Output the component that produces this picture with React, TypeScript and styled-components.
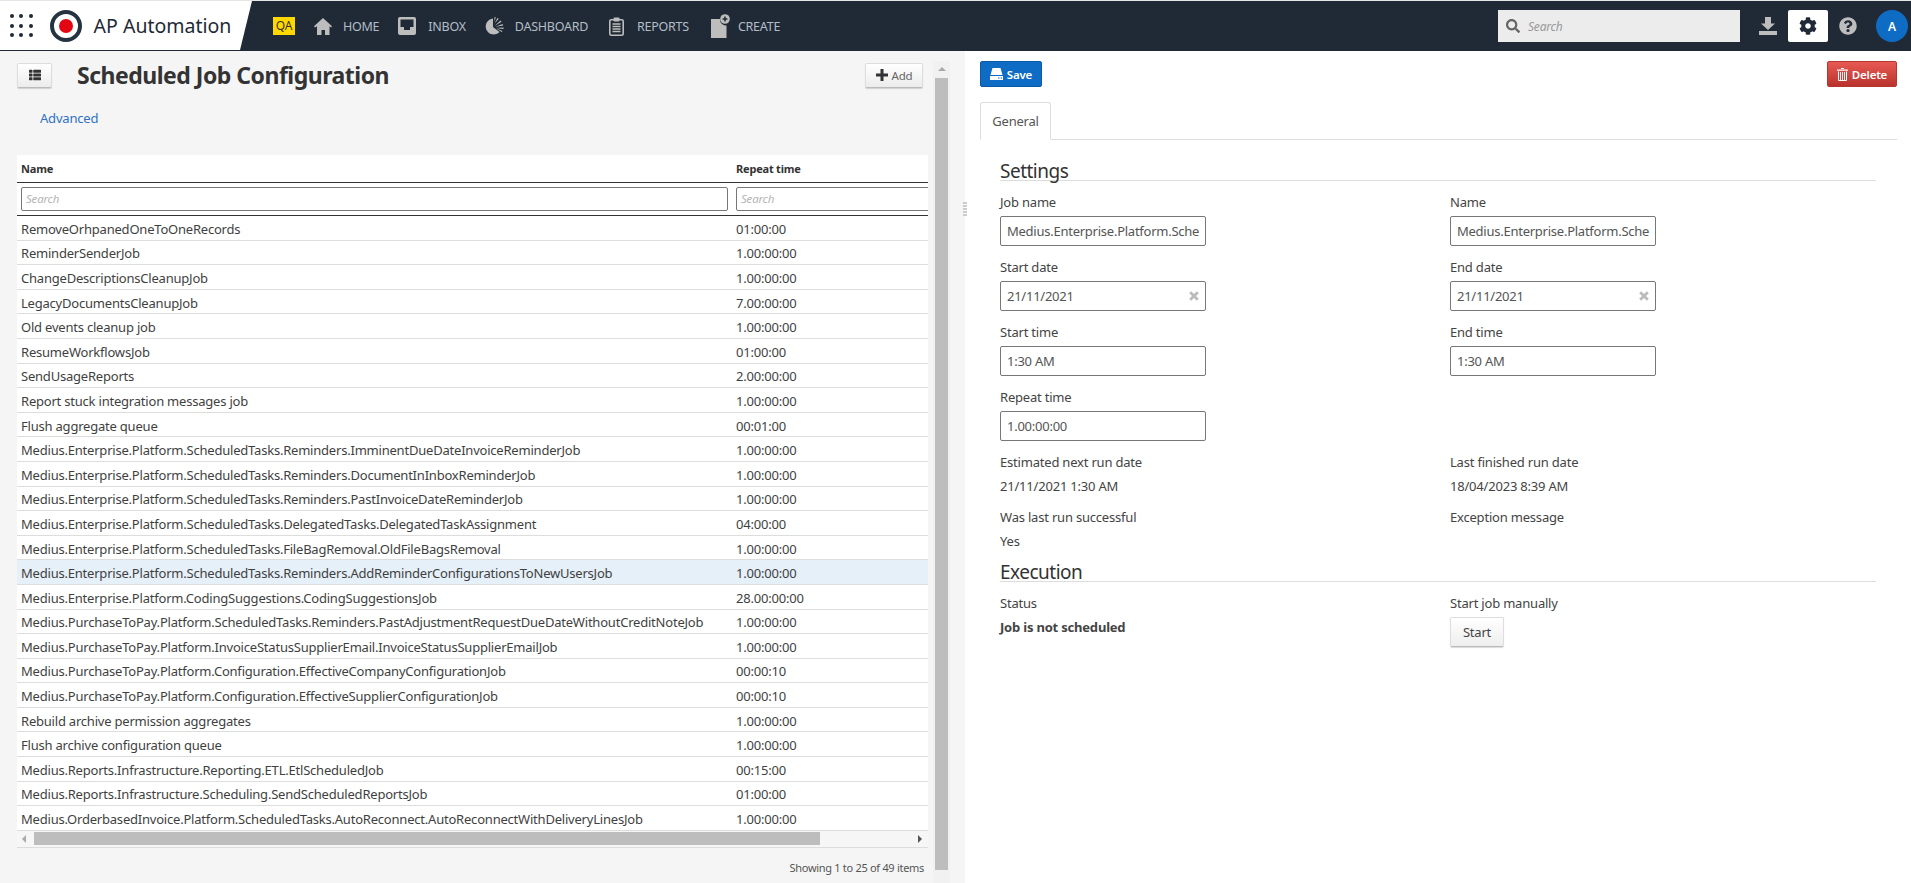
import React from "react";
import styled, { createGlobalStyle } from "styled-components";
import { FaThList, FaCog, FaQuestionCircle, FaSearch } from "react-icons/fa";

const Global = createGlobalStyle`
  html, body { margin: 0; padding: 0; height: 100%; overflow: hidden; background: #fff; }
  body { font-family: "Noto Sans", "Open Sans", sans-serif; color: #333; letter-spacing: -0.2px; }
  * { box-sizing: border-box; }
  button { letter-spacing: inherit; }
`;
const Page = styled.div`height: 883px; width: 1911px; display: flex; flex-direction: column; overflow: hidden; font-size: 13px;`;
const TopBar = styled.header`height: 51px; flex: none; background: #1f2a36; border-top: 1px solid #e6e6e6; display: flex; align-items: center;`;
const Brand = styled.div`width: 252px; height: 49px; align-self: flex-start; background: #fff; clip-path: polygon(0 0, 100% 0, 240px 100%, 0 100%); display: flex; align-items: center; padding-left: 10px; flex: none;`;
const Dots = styled.div`display: grid; grid-template-columns: repeat(3, 4px); gap: 5.3px; margin-right: 17px;`;
const Dot = styled.span`width: 4px; height: 4px; border-radius: 50%; background: #1f2a36;`;
const Logo = styled.div`width: 32px; height: 32px; border-radius: 50%; border: 4px solid #253341; display: flex; align-items: center; justify-content: center; margin-right: 12px; flex: none;
  &::after { content: ""; width: 14px; height: 14px; border-radius: 50%; background: #e30613; }`;
const BrandName = styled.div`font-size: 19.500px; color: #1f2a36; white-space: nowrap; letter-spacing: 0;`;
const Qa = styled.div`width: 22px; height: 18px; background: #ffd800; color: #333; font-size: 12px; line-height: 18px; text-align: center; margin-left: 21px; flex: none;`;
const NavItem = styled.div<{ $gap: number; $ml: number }>`display: flex; align-items: center; color: #b4bcc6; font-size: 12.500px; letter-spacing: -0.25px; gap: ${p => p.$gap}px; margin-left: ${p => p.$ml}px; white-space: nowrap; svg { flex: none; }`;
const Right = styled.div`margin-left: auto; display: flex; align-items: center; height: 100%;`;
const SearchBox = styled.div`width: 242px; height: 32px; background: #ececec; display: flex; align-items: center; padding-left: 8px; gap: 8px; font-style: italic; color: #999; font-size: 12px; margin-right: 8px; svg { color: #666; }`;
const Tool = styled.div<{ $active?: boolean }>`width: 40px; height: 32px; border-radius: 2px; display: flex; align-items: center; justify-content: center; background: ${p => p.$active ? "#fff" : "transparent"}; color: ${p => p.$active ? "#1f2a36" : "#bdbdbd"};`;
const Avatar = styled.div`width: 32px; height: 32px; border-radius: 50%; background: #0f6cc4; color: #fff; font-size: 12px; font-weight: 600; display: flex; align-items: center; justify-content: center; margin: 0 3px 0 8px;`;
const Body = styled.div`flex: 1; display: flex; min-height: 0;`;
const LeftPane = styled.section`width: 933px; flex: none; background: #f5f5f5; display: flex; flex-direction: column; padding: 0 5px 0 17px; overflow: hidden;`;
const VScroll = styled.div`width: 17px; flex: none; background: #f5f5f5; padding-top: 10px; display: flex;`;
const VTrack = styled.div`flex: 1; background: #f1f1f1; display: flex; flex-direction: column; align-items: center;`;
const UpArrow = styled.div`width: 0; height: 0; flex: none; margin: 6px 0 7px; border-left: 4px solid transparent; border-right: 4px solid transparent; border-bottom: 4px solid #aaa;`;
const VThumb = styled.div`width: 13px; flex: 1; background: #bdbdbd; margin-bottom: 13px;`;
const Splitter = styled.div`width: 15px; flex: none; background: #f5f5f5; position: relative;`;
const Grip = styled.div`position: absolute; right: -2px; top: 151px; width: 4px; height: 15px; background: repeating-linear-gradient(#ccc 0 2px, transparent 2px 3px);`;
const TitleRow = styled.div`height: 41px; display: flex; align-items: center; padding-top: 7px;`;
const IconBtn = styled.button`width: 35px; height: 25px; border: 1px solid #ddd; border-bottom-color: #bbb; border-radius: 2px; background: linear-gradient(#fff, #ececec); display: flex; align-items: center; justify-content: center; color: #333; padding: 0; box-shadow: 0 1px 1px rgba(0,0,0,.15);`;
const Title = styled.h1`font-size: 23px; font-weight: 700; color: #333; margin: 0 0 0 25px; flex: 1; letter-spacing: -0.5px;`;
const AddBtn = styled.button`width: 58px; height: 25px; border: 1px solid #ddd; border-bottom-color: #bbb; border-radius: 2px; background: linear-gradient(#fff, #ececec); font: inherit; font-size: 11.500px; color: #666; display: flex; align-items: center; justify-content: center; gap: 4px; padding: 0; box-shadow: 0 1px 1px rgba(0,0,0,.15); margin-right: 5px;`;
const AdvLink = styled.a`display: block; color: #2f72c4; font-size: 13px; margin: 0 0 0 23px; height: 63px; line-height: 19px; padding-top: 17px;`;
const Table = styled.div`width: 911px; background: #fff; overflow: hidden;`;
const Row = styled.div<{ $sel?: boolean }>`display: grid; grid-template-columns: 715px 1fr; height: 24.6px; align-items: center; border-bottom: 1px solid #ddd; font-size: 13px; color: #3f3f3f; white-space: nowrap; background: ${p => p.$sel ? "#e6f0f9" : "#fff"}; padding: 2px 0 0 4px; letter-spacing: -0.21px;`;
const HeadRow = styled.div`display: grid; grid-template-columns: 715px 1fr; height: 28px; align-items: center; border-bottom: 1px solid #333; font-size: 11px; font-weight: 700; padding-left: 4px;`;
const FilterRow = styled.div`display: grid; grid-template-columns: 715px 1fr; height: 33px; align-items: center; border-bottom: 1px solid #333; padding-left: 4px;`;
const Filter = styled.div<{ $open?: boolean }>`height: 24px; width: ${p => p.$open ? "200px" : "707px"}; border: 1px solid #777; border-radius: 2px; background: #fff; font-style: italic; color: #b5b5b5; font-size: 11.500px; line-height: 22px; padding-left: 4px;`;
const HScroll = styled.div`height: 17px; width: 911px; background: #f6f6f6; border-bottom: 1px solid #ddd; display: flex; align-items: center; position: relative; padding-bottom: 1px;`;
const HThumb = styled.div`margin-left: 17px; height: 13px; width: 786px; background: #bdbdbd;`;
const Arrow = styled.span<{ $r?: boolean }>`position: absolute; ${p => p.$r ? "right: 6px;" : "left: 5px;"} top: 4px; width: 0; height: 0; border-top: 4px solid transparent; border-bottom: 4px solid transparent; ${p => p.$r ? "border-left: 4px solid #555;" : "border-right: 4px solid #aaa;"}`;
const Footer = styled.div`width: 911px; text-align: right; font-size: 11px; letter-spacing: -0.3px; color: #555; padding: 12px 4px 0 0;`;
const RightPane = styled.section`flex: 1; background: #fff; padding: 10px 14px 0 15px; min-width: 0;`;
const Actions = styled.div`display: flex; justify-content: space-between; height: 41px;`;
const PrimaryBtn = styled.button<{ $red?: boolean }>`height: 26px; width: ${p => p.$red ? "70px" : "62px"}; border: 1px solid ${p => p.$red ? "#b5372f" : "#0c5ba5"}; border-radius: 2px; background: ${p => p.$red ? "linear-gradient(#e85a54, #b9332c)" : "#0f6cc4"}; color: #fff; font: inherit; font-size: 11.500px; font-weight: 600; display: flex; align-items: center; justify-content: center; gap: 4px; padding: 0;`;
const Tabs = styled.div`height: 38px; border-bottom: 1px solid #ddd;`;
const Tab = styled.div`width: 71px; height: 38px; border: 1px solid #ddd; border-bottom-color: #fff; border-radius: 3px 3px 0 0; text-align: center; line-height: 37px; font-size: 13px; color: #555; background: #fff;`;
const Form = styled.div`padding: 18px 21px 0 20px;`;
const Section = styled.h2<{ $mt?: number }>`font-size: 19px; letter-spacing: -0.5px; font-weight: 400; color: #333; margin: ${p => p.$mt ?? 0}px 0 0; line-height: 27px; height: 23px; border-bottom: 1px solid #ddd;`;
const Grid = styled.div`display: grid; grid-template-columns: 450px 1fr;`;
const Field = styled.div`height: 65px; padding-top: 11px;`;
const Info = styled.div`height: 55px; padding-top: 11px;`;
const Label = styled.div`font-size: 13px; color: #444; line-height: 20px; margin-bottom: 4px;`;
const Input = styled.div`width: 206px; height: 30px; border: 1px solid #777; border-radius: 2px; font-size: 13px; line-height: 28px; color: #555; padding: 0 6px; overflow: hidden; white-space: nowrap; display: flex; justify-content: space-between; align-items: center; letter-spacing: -0.25px; svg { flex: none; }`;
const Value = styled.div<{ $b?: boolean }>`font-size: 13px; color: #444; line-height: 20px; margin-top: 1px; font-weight: ${p => p.$b ? 700 : 400};`;
const StartBtn = styled.button`width: 54px; height: 30px; border: 1px solid #ddd; border-bottom-color: #bbb; border-radius: 2px; background: linear-gradient(#fff, #eee); font: inherit; font-size: 13px; color: #444; padding: 0; box-shadow: 0 1px 1px rgba(0,0,0,.15);`;

const rows: [string, string][] = [
  ["RemoveOrhpanedOneToOneRecords", "01:00:00"],
  ["ReminderSenderJob", "1.00:00:00"],
  ["ChangeDescriptionsCleanupJob", "1.00:00:00"],
  ["LegacyDocumentsCleanupJob", "7.00:00:00"],
  ["Old events cleanup job", "1.00:00:00"],
  ["ResumeWorkflowsJob", "01:00:00"],
  ["SendUsageReports", "2.00:00:00"],
  ["Report stuck integration messages job", "1.00:00:00"],
  ["Flush aggregate queue", "00:01:00"],
  ["Medius.Enterprise.Platform.ScheduledTasks.Reminders.ImminentDueDateInvoiceReminderJob", "1.00:00:00"],
  ["Medius.Enterprise.Platform.ScheduledTasks.Reminders.DocumentInInboxReminderJob", "1.00:00:00"],
  ["Medius.Enterprise.Platform.ScheduledTasks.Reminders.PastInvoiceDateReminderJob", "1.00:00:00"],
  ["Medius.Enterprise.Platform.ScheduledTasks.DelegatedTasks.DelegatedTaskAssignment", "04:00:00"],
  ["Medius.Enterprise.Platform.ScheduledTasks.FileBagRemoval.OldFileBagsRemoval", "1.00:00:00"],
  ["Medius.Enterprise.Platform.ScheduledTasks.Reminders.AddReminderConfigurationsToNewUsersJob", "1.00:00:00"],
  ["Medius.Enterprise.Platform.CodingSuggestions.CodingSuggestionsJob", "28.00:00:00"],
  ["Medius.PurchaseToPay.Platform.ScheduledTasks.Reminders.PastAdjustmentRequestDueDateWithoutCreditNoteJob", "1.00:00:00"],
  ["Medius.PurchaseToPay.Platform.InvoiceStatusSupplierEmail.InvoiceStatusSupplierEmailJob", "1.00:00:00"],
  ["Medius.PurchaseToPay.Platform.Configuration.EffectiveCompanyConfigurationJob", "00:00:10"],
  ["Medius.PurchaseToPay.Platform.Configuration.EffectiveSupplierConfigurationJob", "00:00:10"],
  ["Rebuild archive permission aggregates", "1.00:00:00"],
  ["Flush archive configuration queue", "1.00:00:00"],
  ["Medius.Reports.Infrastructure.Reporting.ETL.EtlScheduledJob", "00:15:00"],
  ["Medius.Reports.Infrastructure.Scheduling.SendScheduledReportsJob", "01:00:00"],
  ["Medius.OrderbasedInvoice.Platform.ScheduledTasks.AutoReconnect.AutoReconnectWithDeliveryLinesJob", "1.00:00:00"],
];

const G = "#bdbdbd";
const HomeIcon = () => (
  <svg width="18" height="17" viewBox="0 0 18 17"><path fillRule="evenodd" d="M9 0l9 8.300-1 1.200-1.500-1.300V17h-4.500v-5H7.500v5H3V8.200L1 9.500 0 8.300z" fill={G}/></svg>
);
const InboxIcon = () => (
  <svg width="18" height="18" viewBox="0 0 18 18"><path fillRule="evenodd" d="M2 0h14a2 2 0 0 1 2 2v14a2 2 0 0 1-2 2H2a2 2 0 0 1-2-2V2a2 2 0 0 1 2-2zM2.500 2.500V10H6v3h6v-3h3.500V2.500z" fill={G}/></svg>
);
const DashIcon = () => (
  <svg width="19" height="18" viewBox="0 0 19 18"><path d="M8 1.500v8.500l6.500 5A8 8 0 1 1 8 1.500z" fill={G}/><path d="M9.500 0l1.300.2-1.300 4.300zM12.500 1l1.300.8-4.300 4.700zM15.500 3.500l1 1.200-7 4.300zM17.500 7l.7 1.500-7.700 1.300zM18.500 10.500v1.500l-7.500-1zM17.500 14l-.8 1-5.500-3.500z" fill={G}/></svg>
);
const ReportsIcon = () => (
  <svg width="15" height="19" viewBox="0 0 15 19"><rect x="0.800" y="2.800" width="13.400" height="15.400" rx="1.500" fill="none" stroke={G} strokeWidth="1.600"/><rect x="4.500" y="0.500" width="6" height="4" rx="1" fill={G}/><path d="M3.500 7h8M3.500 9.500h8M3.500 12h8M3.500 14.500h8" stroke={G} strokeWidth="1.300"/></svg>
);
const CreateIcon = () => (
  <svg width="19" height="24" viewBox="0 0 19 24"><path d="M0 5h9.300a5.500 5.500 0 0 0 6.200 6.500V24H0z" fill={G}/><circle cx="14" cy="5" r="4.800" fill={G}/><path d="M14 2.600v4.800M11.600 5h4.800" stroke="#1f2a36" strokeWidth="1.500"/></svg>
);
const DownloadIcon = () => (
  <svg width="18" height="18" viewBox="0 0 18 18"><path d="M6 0h6v6.500h4L9 13 2 6.500h4z" fill={G}/><rect y="14" width="18" height="4" fill={G}/></svg>
);
const PlusIcon = () => (
  <svg width="12" height="12" viewBox="0 0 12 12"><path d="M4.500 0h3v4.500H12v3H7.500V12h-3V7.500H0v-3h4.500z" fill="#333"/></svg>
);
const ClearIcon = () => (
  <svg width="10" height="10" viewBox="0 0 10 10"><path d="M1.200 1.200l7.600 7.600M8.800 1.200L1.200 8.800" stroke="#bbb" strokeWidth="2.800"/></svg>
);
const SaveIcon = () => (
  <svg width="13" height="12" viewBox="0 0 13 12"><path d="M2.500 0h8L12.500 7H.5z" fill="#fff"/><path fillRule="evenodd" d="M0 8h13v4H0zM8 9.500v1h1.500v-1zM10.500 9.500v1H12v-1z" fill="#fff"/></svg>
);
const TrashIcon = () => (
  <svg width="11" height="13" viewBox="0 0 11 13"><path d="M4 .5h3M0 2.200h11" stroke="#fff" strokeWidth="1.200"/><path d="M1.500 3.500v9h8v-9" fill="none" stroke="#fff" strokeWidth="1"/><path d="M3.500 4v8M5.500 4v8M7.500 4v8" stroke="#fff" strokeWidth=".9"/></svg>
);

const row2 = (a: React.ReactNode, b: React.ReactNode) => <Grid>{a}{b}</Grid>;
const F = ({ l, v, clear }: { l: string; v: string; clear?: boolean }) => (
  <Field><Label>{l}</Label><Input><span>{v}</span>{clear && <ClearIcon />}</Input></Field>
);

export default function App() {
  return (
    <Page>
      <Global />
      <TopBar>
        <Brand>
          <Dots>{Array.from({ length: 9 }).map((_, i) => <Dot key={i} />)}</Dots>
          <Logo />
          <BrandName>AP Automation</BrandName>
        </Brand>
        <Qa>QA</Qa>
        <NavItem $ml={19} $gap={11}><HomeIcon />HOME</NavItem>
        <NavItem $ml={19} $gap={12}><InboxIcon />INBOX</NavItem>
        <NavItem $ml={19} $gap={11}><DashIcon />DASHBOARD</NavItem>
        <NavItem $ml={21} $gap={13}><ReportsIcon />REPORTS</NavItem>
        <NavItem $ml={22} $gap={8}><CreateIcon />CREATE</NavItem>
        <Right>
          <SearchBox><FaSearch size={14} />Search</SearchBox>
          <Tool><DownloadIcon /></Tool>
          <Tool $active><FaCog size={18} /></Tool>
          <Tool><FaQuestionCircle size={18} /></Tool>
          <Avatar>A</Avatar>
        </Right>
      </TopBar>
      <Body>
        <LeftPane>
          <TitleRow>
            <IconBtn><FaThList size={12} /></IconBtn>
            <Title>Scheduled Job Configuration</Title>
            <AddBtn><PlusIcon />Add</AddBtn>
          </TitleRow>
          <AdvLink>Advanced</AdvLink>
          <Table>
            <HeadRow><span>Name</span><span>Repeat time</span></HeadRow>
            <FilterRow><Filter>Search</Filter><Filter $open>Search</Filter></FilterRow>
            {rows.map((r, i) => <Row key={i} $sel={i === 14}><span>{r[0]}</span><span>{r[1]}</span></Row>)}
          </Table>
          <HScroll><Arrow /><HThumb /><Arrow $r /></HScroll>
          <Footer>Showing 1 to 25 of 49 items</Footer>
        </LeftPane>
        <VScroll><VTrack><UpArrow /><VThumb /></VTrack></VScroll>
        <Splitter><Grip /></Splitter>
        <RightPane>
          <Actions>
            <PrimaryBtn><SaveIcon />Save</PrimaryBtn>
            <PrimaryBtn $red><TrashIcon />Delete</PrimaryBtn>
          </Actions>
          <Tabs><Tab>General</Tab></Tabs>
          <Form>
            <Section>Settings</Section>
            {row2(<F l="Job name" v="Medius.Enterprise.Platform.Sche" />, <F l="Name" v="Medius.Enterprise.Platform.Sche" />)}
            {row2(<F l="Start date" v="21/11/2021" clear />, <F l="End date" v="21/11/2021" clear />)}
            {row2(<F l="Start time" v="1:30 AM" />, <F l="End time" v="1:30 AM" />)}
            {row2(<F l="Repeat time" v="1.00:00:00" />, <div />)}
            {row2(<Info><Label>Estimated next run date</Label><Value>21/11/2021 1:30 AM</Value></Info>, <Info><Label>Last finished run date</Label><Value>18/04/2023 8:39 AM</Value></Info>)}
            {row2(<Info><Label>Was last run successful</Label><Value>Yes</Value></Info>, <Info><Label>Exception message</Label></Info>)}
            <Section $mt={8}>Execution</Section>
            {row2(<Field><Label>Status</Label><Value $b>Job is not scheduled</Value></Field>, <Field><Label>Start job manually</Label><StartBtn>Start</StartBtn></Field>)}
          </Form>
        </RightPane>
      </Body>
    </Page>
  );
}
